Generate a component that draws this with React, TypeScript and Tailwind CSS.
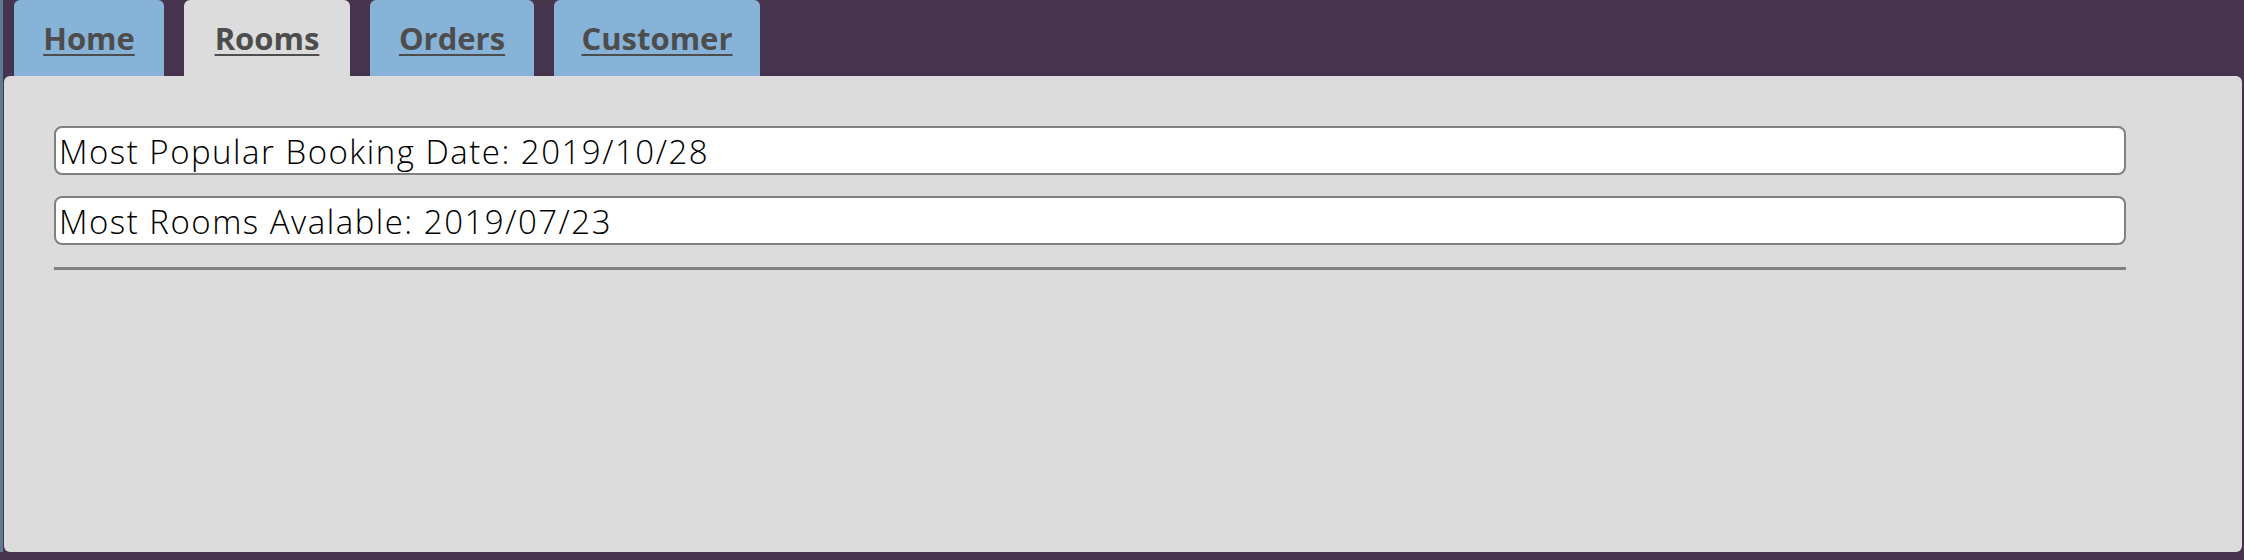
import React from "react";

const tabs = [
  { label: "Home", w: "w-[150px]", active: false },
  { label: "Rooms", w: "w-[166px]", active: true },
  { label: "Orders", w: "w-[164px]", active: false },
  { label: "Customer", w: "w-[206px]", active: false },
];

export default function App() {
  return (
    <div className="w-[2244px] h-[560px] bg-[#46344f] flex overflow-hidden">
      <div className="w-[3px] h-[552px] bg-[#5d7a92] shrink-0" />
      <div className="flex flex-col ml-[1px] w-[2238px]">
        <div className="flex gap-[20px] pl-[10px] h-[76px]">
          {tabs.map((t) => (
            <div
              key={t.label}
              className={
                t.active
                  ? "w-[166px] h-[76px] bg-[#dcdcdc] rounded-t-[6px] flex justify-center pt-[20px]"
                  : "h-[76px] bg-[#88b3d8] rounded-t-[6px] flex justify-center pt-[20px] " + t.w
              }
            >
              <span
                className="text-[#4d4d4d] font-bold text-[31px] leading-[36px] underline decoration-[2px] underline-offset-[4px]"
                style={{ fontFamily: '"Open Sans", "Noto Sans", sans-serif' }}
              >
                {t.label}
              </span>
            </div>
          ))}
        </div>
        <div className="h-[476px] bg-[#dcdcdc] rounded-[6px] pt-[50px] pl-[50px]">
          <div className="flex flex-col gap-[21px] w-[2072px]">
            {["Most Popular Booking Date: 2019/10/28", "Most Rooms Avalable: 2019/07/23"].map((s) => (
              <div
                key={s}
                className="h-[49px] bg-white border-2 border-[#808080] rounded-[8px] flex items-center pl-[3px] pt-[2px] text-black text-[33px] tracking-[1.5px] font-light"
                style={{ fontFamily: '"Open Sans", "Noto Sans", sans-serif' }}
              >
                {s}
              </div>
            ))}
          </div>
          <div className="w-[2072px] h-[3px] bg-[#808080] mt-[22px]" />
        </div>
      </div>
    </div>
  );
}
